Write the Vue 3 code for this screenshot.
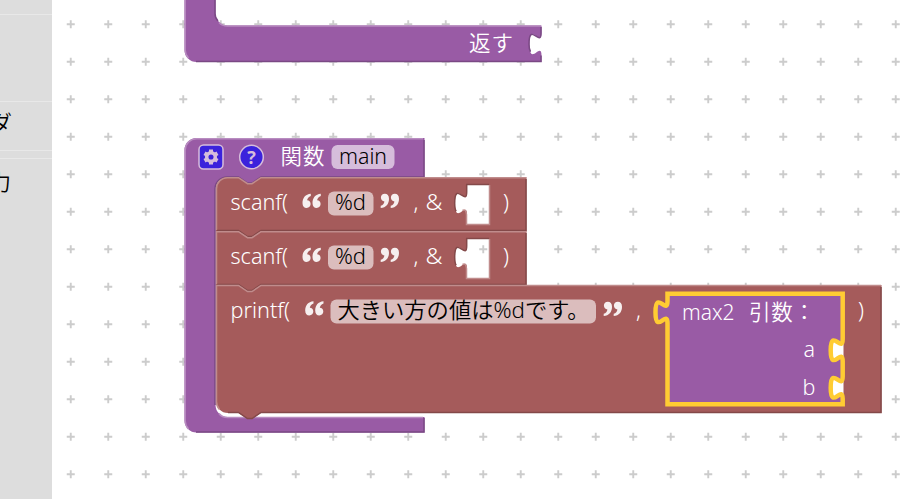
<script setup>
const crosses = []
for (let r = 0; r < 13; r++) {
  for (let c = 0; c < 23; c++) crosses.push({ x: 70.75 + c * 37.5, y: 24.25 + r * 37.5 })
}
const crossPath = crosses.map(p => `M${p.x - 4} ${p.y}h8M${p.x} ${p.y - 4}v8`).join('')

const tab = 'c0 15 -12 -12 -12 11.25s12 -3.75 12 11.25'
const tabUp = 'c0 -15 -12 12 -12 -11.25s12 3.75 12 -11.25'
const notch = 'l9 6h4.500l9 -6'

const scanfs = [
  { y: 178, cross: 211.75 },
  { y: 232, cross: 195.25 },
]

const quoteOpen = 'M8.300 0C3 .5 0 4 0 9.300C0 12.500 1.700 14.300 4.100 14.300S8.100 12.600 8.100 10.400S6.600 6.700 4.600 6.600C4.900 4.400 6.100 3 8.300 2.200zM18.300 0C13 .5 10 4 10 9.300C10 12.500 11.700 14.300 14.100 14.300S18.100 12.600 18.100 10.400S16.600 6.700 14.600 6.600C14.900 4.400 16.100 3 18.300 2.200z'

const outline = `M667.500 293.800H842.700V339${tab}v15${tab}V404.300H667.500V323.500${tabUp}z`
const sockets = `M843.500 339${tab}zM843.500 376.500${tab}z`
</script>

<template>
  <div class="editor">
    <aside class="toolbox">
      <div class="category first"></div>
      <div class="category blank"></div>
      <div class="category header"><span>ダ</span></div>
      <div class="divider"></div>
      <div class="category io"><span>力</span></div>
    </aside>
    <svg class="workspace" width="918" height="499" viewBox="0 0 918 499">
      <path class="grid" :d="crossPath" />

      <g>
        <path class="purple" :d="`M184.500 -5H215.500V13.500A12 12 0 0 0 227.500 25.500H541.500V33${tab}V62H196.500A12 12 0 0 1 184.500 50z`" />
        <path class="purple-light" d="M185.200 -5V50A11.500 11.500 0 0 0 188.500 58M219 22.500Q222 26 227.500 26H541" />
        <path class="purple-dark" d="M215 -5V13.500Q215 18 218 21M196 61.500H541V55.500M541 27V33c0 15 -12 -12 -12 11.250q0 5 1.500 7.500" />
        <text class="label" x="469" y="50.500" textLength="44">返す</text>
      </g>

      <g>
        <path class="purple" :d="`M196.500 138H424.500V177H261l-9 6h-4.500l-9 -6H227.500A12 12 0 0 0 215.500 189V405A12 12 0 0 0 227.500 417H424.500V432.500H196.500A12 12 0 0 1 184.500 420.500V150A12 12 0 0 1 196.500 138z`" />
        <path class="purple-light" d="M188.500 429A12 12 0 0 1 185.200 420.500V150A11.500 11.500 0 0 1 196.500 138.700H423M219 413.500Q222 417.500 227.500 417.500H423" />
        <path class="purple-dark" d="M424 140V177H261l-9 6h-4.500l-9 -6H227.500A12 12 0 0 0 215 189V405M424 418V432H196" />
        <g class="icon" transform="translate(199 145)">
          <rect x="0" y="0" width="24" height="24" rx="4.500" />
          <circle class="gear" cx="12" cy="12" r="4.300" />
          <path class="teeth" d="M12 4.500V7.500M12 16.500V19.500M5.500 8.250L8.100 9.750M15.900 14.250L18.500 15.750M5.500 15.750L8.100 14.250M15.900 9.750L18.500 8.250" />
        </g>
        <g class="icon">
          <circle cx="251.500" cy="157" r="11.800" />
          <text class="question" x="251.500" y="163.500" text-anchor="middle">?</text>
        </g>
        <text class="label" x="280.500" y="163.500" textLength="44">関数</text>
        <rect class="field purple-field" x="331.500" y="145" width="63" height="24" rx="6" />
        <text class="value" x="339" y="163.500" textLength="48" lengthAdjust="spacingAndGlyphs">main</text>
      </g>

      <g v-for="s in scanfs" :key="s.y">
        <path class="red" :d="`M227.500 ${s.y - 1}H238.500${notch}H526.500V${s.y + 53}H261l-9 6h-4.500l-9 -6H216V${s.y === 178 ? s.y + 11 : s.y - 1}${s.y === 178 ? 'A12 12 0 0 1 227.500 177' : ''}z`" />
        <path v-if="s.y === 178" class="red-light" :d="`M216.500 230V189A11 11 0 0 1 227.500 177.700H238.500${notch}H526`" />
        <path v-else class="red-light" :d="`M216.500 284V231.700H238.500${notch}H526`" />
        <path class="red-dark" :d="`M217 ${s.y + 52.500}H238.500${notch}H526V${s.y + 1}`" />
        <g :transform="`translate(0 ${s.y - 178})`">
          <path class="hole" :d="`M467 185h22v39h-22v-9.500${tabUp}z`" />
          <path class="red-dark" d="M489 184.500H466.700V192c0 15 -12 -12 -12 11.250q0 6 1.500 8" />
          <path class="red-light" d="M489.500 185V224.500H466.500V214.500q-.5 -6 -4 -4" />
          <path class="cross" :d="`M479.250 ${s.cross}h8M483.250 ${s.cross - 4}v8`" />
          <text class="label" x="230.500" y="210" textLength="57.500" lengthAdjust="spacingAndGlyphs">scanf(</text>
          <path class="quote" :d="quoteOpen" transform="translate(302.500 193.700)" />
          <rect class="field red-field" x="328" y="191.500" width="45.500" height="24" rx="6" />
          <text class="value" x="335" y="210" textLength="31" lengthAdjust="spacingAndGlyphs">%d</text>
          <path class="quote" :d="quoteOpen" transform="translate(399 208) rotate(180)" />
          <text class="label" x="413.500" y="210">,</text>
          <text class="label" x="425.500" y="210" textLength="17" lengthAdjust="spacingAndGlyphs">&amp;</text>
          <text class="label" x="503" y="210">)</text>
        </g>
      </g>

      <g>
        <path class="red" :d="`M216 285H238.500${notch}H881.500V413H261l-9 6h-4.500l-9 -6H228A12 12 0 0 1 216 401z`" />
        <path class="red-light" :d="`M219.500 409.500A12 12 0 0 1 216.500 401V285.500H238.500${notch}H881`" />
        <path class="red-dark" d="M881 287V412.500H261l-9 6h-4.500l-9 -6H228" />
        <text class="label" x="230.500" y="318" textLength="59.500" lengthAdjust="spacingAndGlyphs">printf(</text>
        <path class="quote" :d="quoteOpen" transform="translate(305.200 301.200)" />
        <rect class="field red-field" x="330.500" y="299.500" width="265.500" height="24" rx="6" />
        <text class="value" x="337.500" y="318" textLength="252" lengthAdjust="spacingAndGlyphs">大きい方の値は%dです。</text>
        <path class="quote" :d="quoteOpen" transform="translate(622 316) rotate(180)" />
        <text class="label" x="636" y="318">,</text>
        <text class="label" x="858" y="318">)</text>
      </g>

      <g>
        <path class="call" :d="outline" />
        <path class="socket" :d="sockets" />
        <path class="selection" :d="outline" />
        <text class="label" x="682" y="320" textLength="52.500" lengthAdjust="spacingAndGlyphs">max2</text>
        <text class="label" x="749" y="320" textLength="66">引数：</text>
        <text class="label" x="803.500" y="357">a</text>
        <text class="label" x="802.500" y="395">b</text>
      </g>
    </svg>
  </div>
</template>

<style>
body { margin: 0; background: #fff; overflow: hidden; }
</style>

<style scoped>
.editor { display: grid; width: 918px; height: 499px; overflow: hidden; font-family: "Noto Sans", "Noto Sans CJK JP", sans-serif; }
.toolbox { grid-area: 1 / 1; z-index: 1; box-sizing: border-box; width: 52px; height: 499px; background: #ddd; overflow: hidden; }
.category { box-sizing: border-box; display: flex; justify-content: flex-end; align-items: center; padding-right: 40px; border-bottom: 1px solid #e8e8e8; font-size: 22px; font-weight: 350; color: #000; white-space: nowrap; }
.first { height: 15px; }
.blank { height: 87px; }
.header { height: 49px; padding-bottom: 10px; }
.divider { height: 8px; border-bottom: 1px solid #e8e8e8; box-sizing: border-box; }
.io { height: 49px; border: 0; padding-right: 41px; padding-bottom: 7px; }
.workspace { grid-area: 1 / 1; display: block; }
.grid, .cross { fill: none; stroke: #ccc; stroke-width: 1.900; }
.purple, .call { fill: #995ba5; }
.red { fill: #a55b5b; }
.purple-light, .purple-dark, .red-light, .red-dark { fill: none; stroke-width: 1.5; }
.purple-light { stroke: #b88cc0; }
.purple-dark { stroke: #7a4984; }
.red-light { stroke: #c08c8c; }
.red-dark { stroke: #844949; }
.hole, .socket { fill: #fff; }
.label, .value { font-size: 21.500px; font-weight: 350; white-space: pre; }
.label { fill: #fff; }
.value { fill: #000; }
.purple-field { fill: #d6bddb; }
.red-field { fill: #dbbdbd; }
.icon rect, .icon circle { fill: #3b22dc; stroke: #d6bddb; stroke-width: 1.5; }
.icon .gear { fill: none; stroke-width: 3.500; }
.teeth { fill: none; stroke: #d6bddb; stroke-width: 4; }
.question { fill: #d6bddb; font: 700 18px "Open Sans", sans-serif; }
.quote { fill: #fff; opacity: .9; }
.selection { fill: none; stroke: #fc3; stroke-width: 4.500; stroke-linejoin: miter; }
</style>
